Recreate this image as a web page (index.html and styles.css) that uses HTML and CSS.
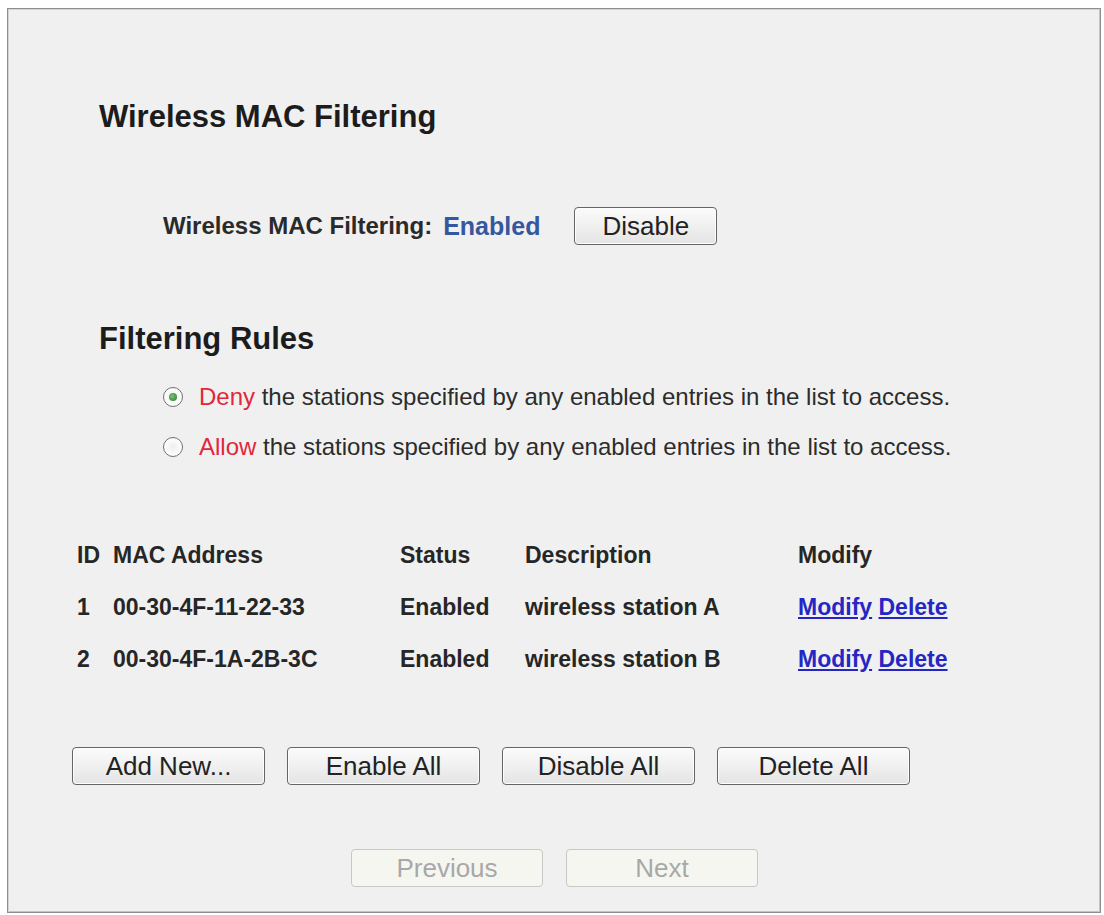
FILE: index.html
```html
<!DOCTYPE html>
<html>
<head>
<meta charset="utf-8">
<title>Wireless MAC Filtering</title>
<link rel="stylesheet" href="styles.css">
</head>
<body>
<div class="panel">
  <h1 class="title">Wireless MAC Filtering</h1>

  <div class="status-row">
    <span class="status-label">Wireless MAC Filtering:</span>
    <span class="status-value">Enabled</span>
    <button class="btn btn-disable" type="button">Disable</button>
  </div>

  <h2 class="title title-rules">Filtering Rules</h2>

  <div class="rules">
    <label class="rule">
      <input class="radio" type="radio" name="rule" checked>
      <span class="rule-text"><span class="kw">Deny</span> the stations specified by any enabled entries in the list to access.</span>
    </label>
    <label class="rule">
      <input class="radio" type="radio" name="rule">
      <span class="rule-text"><span class="kw">Allow</span> the stations specified by any enabled entries in the list to access.</span>
    </label>
  </div>

  <div class="table">
    <div class="cell">ID</div>
    <div class="cell">MAC Address</div>
    <div class="cell">Status</div>
    <div class="cell">Description</div>
    <div class="cell">Modify</div>

    <div class="cell">1</div>
    <div class="cell">00-30-4F-11-22-33</div>
    <div class="cell">Enabled</div>
    <div class="cell">wireless station A</div>
    <div class="cell"><a class="link" href="#">Modify</a> <a class="link" href="#">Delete</a></div>

    <div class="cell">2</div>
    <div class="cell">00-30-4F-1A-2B-3C</div>
    <div class="cell">Enabled</div>
    <div class="cell">wireless station B</div>
    <div class="cell"><a class="link" href="#">Modify</a> <a class="link" href="#">Delete</a></div>
  </div>

  <div class="actions">
    <button class="btn btn-wide" type="button">Add New...</button>
    <button class="btn btn-wide" type="button">Enable All</button>
    <button class="btn btn-wide" type="button">Disable All</button>
    <button class="btn btn-wide" type="button">Delete All</button>
  </div>

  <div class="pager">
    <button class="btn btn-page" type="button" disabled>Previous</button>
    <button class="btn btn-page" type="button" disabled>Next</button>
  </div>
</div>
</body>
</html>
```

FILE: styles.css
```css
html, body {
  margin: 0;
  padding: 0;
  background: #ffffff;
}

body {
  font-family: "Liberation Sans", Arial, sans-serif;
  color: #262626;
}

.panel {
  box-sizing: border-box;
  margin: 8px 3px 0 7px;
  height: 905px;
  border: 1px solid #8e8e8e;
  box-shadow: inset 1px 1px 0 #d4d4d4, inset -1px -1px 0 #c4c4c4;
  background: #f0f0f0;
  padding-top: 90px;
}

.title {
  margin: 0 0 0 91px;
  font-size: 31px;
  line-height: 36px;
  font-weight: bold;
  color: #1c1c1c;
}

.title-rules {
  margin-top: 76px;
}

.status-row {
  display: flex;
  align-items: center;
  height: 38px;
  margin: 72px 0 0 155px;
}

.status-label {
  font-size: 24px;
  font-weight: bold;
  color: #2a2a2a;
  margin-right: 11px;
}

.status-value {
  font-size: 25px;
  font-weight: bold;
  color: #3557a0;
  margin-right: 34px;
}

.btn {
  box-sizing: border-box;
  height: 38px;
  padding: 0;
  font-family: "Liberation Sans", Arial, sans-serif;
  font-size: 26px;
  line-height: 34px;
  color: #222222;
  background: linear-gradient(#fbfbfb, #f0f0f0 50%, #e4e4e4);
  border: 1px solid #656565;
  border-radius: 4px;
  box-shadow: inset 0 0 0 1px #fdfdfd;
}

.btn-disable {
  width: 143px;
}

.rules {
  margin: 15px 0 0 155px;
}

.rule {
  display: flex;
  align-items: center;
  height: 50px;
}

.radio {
  appearance: none;
  -webkit-appearance: none;
  box-sizing: border-box;
  width: 20px;
  height: 20px;
  margin: 0 16px 0 0;
  border: 1px solid #6f6f6f;
  border-radius: 50%;
  background: radial-gradient(circle, #eeeeee 0, #ffffff 75%);
  display: flex;
  align-items: center;
  justify-content: center;
}

.radio:checked::after {
  content: "";
  width: 8px;
  height: 8px;
  border-radius: 50%;
  background: radial-gradient(circle at 40% 40%, #7cc276, #2a7a2e);
}

.rule-text {
  font-size: 24px;
  color: #2c2c2c;
}

.kw {
  color: #e0283a;
}

.table {
  display: grid;
  grid-template-columns: 36px 287px 125px 273px 1fr;
  grid-auto-rows: 52px;
  align-items: center;
  margin: 57px 0 0 69px;
  font-size: 23px;
  font-weight: bold;
  color: #262626;
}

.link {
  color: #2626c4;
  text-decoration: underline;
}

.actions {
  display: flex;
  gap: 22px;
  margin: 62px 0 0 64px;
}

.btn-wide {
  width: 193px;
}

.pager {
  display: flex;
  gap: 23px;
  margin: 64px 0 0 343px;
}

.btn-page {
  width: 192px;
  color: #a8a8a8;
  background: #f6f6f0;
  border: 1px solid #c8c8c8;
  box-shadow: none;
}
```
